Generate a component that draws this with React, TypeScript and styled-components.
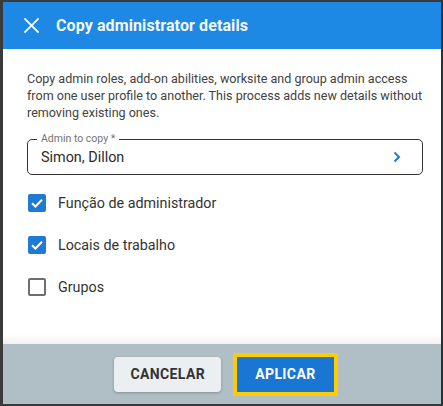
import styled, { createGlobalStyle } from "styled-components";

const Global = createGlobalStyle`
  html, body {
    margin: 0;
    padding: 0;
    background: #ffffff;
  }
  * {
    box-sizing: border-box;
  }
`;

const Frame = styled.div`
  width: 443px;
  height: 406px;
  display: flex;
  flex-direction: column;
  border-top: 2px solid #3a3a3a;
  border-left: 3px solid #3a3a3a;
  border-right: 2px solid #263238;
  border-bottom: 2px solid #3a3a3a;
  font-family: Roboto, "Liberation Sans", sans-serif;
  overflow: hidden;
`;

const Header = styled.header`
  height: 47px;
  flex-shrink: 0;
  background: #1e88e5;
  display: flex;
  align-items: center;
  padding-left: 20px;
  gap: 17px;
`;

const CloseButton = styled.button`
  width: 16px;
  height: 16px;
  padding: 0;
  border: none;
  background: transparent;
  display: flex;
  align-items: center;
  justify-content: center;
  cursor: pointer;
`;

const Title = styled.h2`
  margin: 0;
  font-size: 16px;
  font-weight: 700;
  color: #f4f8fd;
  letter-spacing: 0.1px;
`;

const Body = styled.div`
  flex: 1;
  display: flex;
  flex-direction: column;
  padding: 21px 18px 0 24px;
  background: #ffffff;
  position: relative;

  &::after {
    content: "";
    position: absolute;
    left: 0;
    right: 0;
    bottom: 0;
    height: 10px;
    background: linear-gradient(to bottom, rgba(240, 240, 240, 0), #f1f1f1);
  }
`;

const Description = styled.p`
  margin: 0;
  font-size: 12.55px;
  line-height: 17px;
  color: #424242;
`;

const Field = styled.div`
  margin-top: 18px;
  padding: 0 20px 0 13px;
  height: 36px;
  border: 1px solid #333333;
  border-radius: 5px;
  display: flex;
  align-items: center;
  justify-content: space-between;
  position: relative;
`;

const FieldLabel = styled.span`
  position: absolute;
  left: 9px;
  top: -7px;
  font-size: 10.5px;
  line-height: 12px;
  color: #757575;
  padding: 0 4px;
  background: #ffffff;
`;

const FieldValue = styled.span`
  font-size: 14.4px;
  color: #2b2b2b;
`;

const Chevron = styled.span`
  display: flex;
`;

const Options = styled.div`
  display: flex;
  flex-direction: column;
  gap: 24px;
  margin-top: 19px;
  padding-left: 1px;
`;

const OptionRow = styled.label`
  display: flex;
  align-items: center;
  gap: 12px;
  height: 18px;
  font-size: 14.3px;
  color: #333333;
`;

const Box = styled.span<{ checked: boolean }>`
  width: 18px;
  height: 18px;
  border-radius: 2px;
  display: flex;
  align-items: center;
  justify-content: center;
  background: ${p => (p.checked ? "#1e7ad6" : "#ffffff")};
  border: 2px solid ${p => (p.checked ? "#1e7ad6" : "#6e6e6e")};
`;

const Footer = styled.footer`
  height: 60px;
  flex-shrink: 0;
  background: #b0bec5;
  display: flex;
  align-items: center;
  justify-content: center;
  gap: 16px;
  padding-left: 4px;
`;

const Button = styled.button<{ primary?: boolean; focused?: boolean }>`
  height: 35px;
  padding: 0 ${p => (p.primary ? "18px" : "16px")};
  min-width: ${p => (p.primary ? "96px" : "106px")};
  border: none;
  border-radius: ${p => (p.primary ? "0" : "4px")};
  font-family: Roboto, "Liberation Sans", sans-serif;
  font-size: 14px;
  font-weight: 700;
  letter-spacing: 0.4px;
  color: ${p => (p.primary ? "#ffffff" : "#333333")};
  background: ${p => (p.primary ? "#1976d2" : "#eceff1")};
  box-shadow: ${p =>
    p.focused ? "0 0 0 4px #ffcc00" : "0 1px 3px rgba(0, 0, 0, 0.25)"};
  cursor: pointer;
`;

const options = [
  { label: "Função de administrador", checked: true },
  { label: "Locais de trabalho", checked: true },
  { label: "Grupos", checked: false },
];

export default function App() {
  return (
    <>
      <Global />
      <Frame>
        <Header>
          <CloseButton aria-label="Close">
            <svg width="15" height="15" viewBox="0 0 15 15">
              <path
                d="M1 1 L14 14 M14 1 L1 14"
                stroke="#f4f8fd"
                strokeWidth="1.8"
                strokeLinecap="square"
              />
            </svg>
          </CloseButton>
          <Title>Copy administrator details</Title>
        </Header>
        <Body>
          <Description>
            Copy admin roles, add-on abilities, worksite and group admin access
            from one user profile to another. This process adds new details
            without removing existing ones.
          </Description>
          <Field>
            <FieldLabel>Admin to copy *</FieldLabel>
            <FieldValue>Simon, Dillon</FieldValue>
            <Chevron>
              <svg width="10" height="12" viewBox="0 0 10 12">
                <path
                  d="M2.5 1.5 L7 6 L2.5 10.5"
                  fill="none"
                  stroke="#1e7ad6"
                  strokeWidth="2"
                />
              </svg>
            </Chevron>
          </Field>
          <Options>
            {options.map(o => (
              <OptionRow key={o.label}>
                <Box checked={o.checked}>
                  {o.checked && (
                    <svg width="14" height="14" viewBox="0 0 14 14">
                      <path
                        d="M2 7.2 L5.4 10.5 L12 3.8"
                        fill="none"
                        stroke="#ffffff"
                        strokeWidth="2"
                      />
                    </svg>
                  )}
                </Box>
                {o.label}
              </OptionRow>
            ))}
          </Options>
        </Body>
        <Footer>
          <Button>CANCELAR</Button>
          <Button primary focused>
            APLICAR
          </Button>
        </Footer>
      </Frame>
    </>
  );
}
